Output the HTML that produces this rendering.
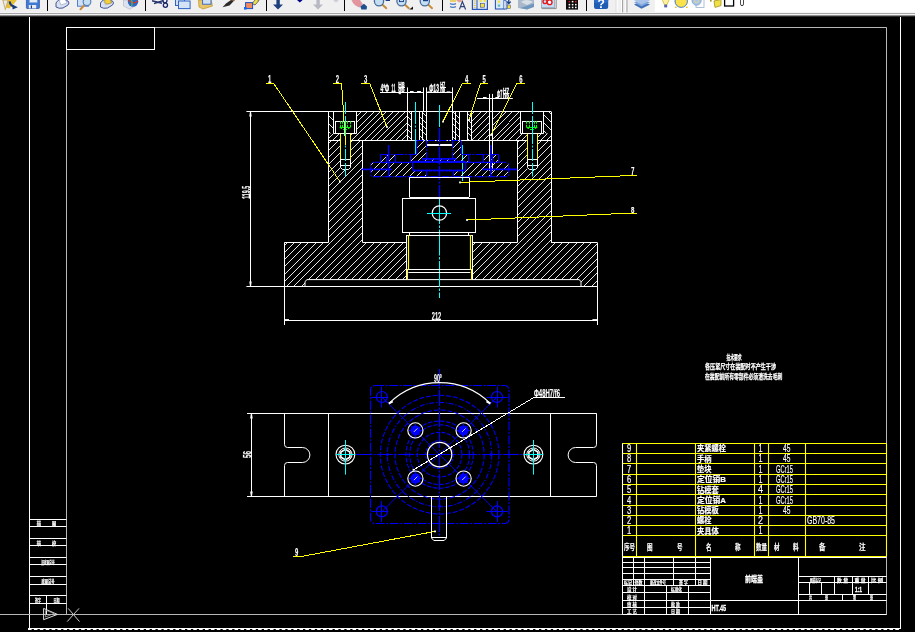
<!DOCTYPE html>
<html lang="zh"><head><meta charset="utf-8"><title>CAD</title>
<style>
html,body{margin:0;padding:0;background:#000;overflow:hidden}
svg{display:block}
text{white-space:pre}
</style></head><body>
<svg width="915" height="632" viewBox="0 0 915 632">
<defs>
<filter id="nf" filterUnits="userSpaceOnUse" x="0" y="0" width="915" height="632" color-interpolation-filters="sRGB"><feOffset dx="0" dy="0"/></filter>
<clipPath id="c1"><path d="M328.6,140.5 H362.4 V242.4 H328.6 ZM340,140.5 H350.4 V169.6 H340 Z" clip-rule="evenodd"/></clipPath>
<clipPath id="c2"><path d="M517.6,140.5 H551 V242.4 H517.6 ZM527.2,140.5 H537.8 V169.6 H527.2 Z" clip-rule="evenodd"/></clipPath>
<clipPath id="c3"><path d="M284.4,242.4 H597 V286.4 H581 V279.6 H305 V286.4 H284.4 ZM406.4,242.4 H472 V279.6 H406.4 Z" clip-rule="evenodd"/></clipPath>
<clipPath id="c4"><path d="M328.6,111.6 H551 V140.5 H328.6 ZM328.6,111.6 H333.6 V133.6 H328.6 ZM543.5,111.6 H551 V133.6 H543.5 ZM333.6,111.6 H356.4 V133.6 H333.6 ZM340,133.6 H350.4 V140.5 H340 ZM520.5,111.6 H543.5 V133.6 H520.5 ZM527.2,133.6 H537.8 V140.5 H527.2 ZM407.5,111.6 H471.1 V140.5 H407.5 ZM489.5,111.6 H492.1 V140.5 H489.5 Z" clip-rule="evenodd"/></clipPath>
<clipPath id="c5"><path d="M328.6,111.6 H333.6 V133.6 H328.6 Z" clip-rule="evenodd"/></clipPath>
<clipPath id="c6"><path d="M543.5,111.6 H551 V133.6 H543.5 Z" clip-rule="evenodd"/></clipPath>
<clipPath id="c7"><path d="M407.5,111.6 H411.3 V140.5 H407.5 Z" clip-rule="evenodd"/></clipPath>
<clipPath id="c8"><path d="M419.1,111.6 H426.2 V140.5 H419.1 Z" clip-rule="evenodd"/></clipPath>
<clipPath id="c9"><path d="M452.4,111.6 H459.4 V140.5 H452.4 Z" clip-rule="evenodd"/></clipPath>
<clipPath id="c10"><path d="M467,111.6 H471.1 V140.5 H467 Z" clip-rule="evenodd"/></clipPath>
<clipPath id="c11"><path d="M370.8,162.3 H380.5 V154.4 H416.5 V140.8 H461.9 V154.4 H498.4 V162.3 H508.5 V176.6 H370.8 ZM426.7,140.8 H452.8 V159 H426.7 ZM412.5,161.4 H465.7 V170.3 H412.5 ZM426.2,170.3 H453 V176.6 H426.2 ZM395.4,154.4 H410.6 V162.3 H395.4 ZM468.6,154.4 H483.8 V162.3 H468.6 Z" clip-rule="evenodd"/></clipPath>
</defs>
<rect x="0" y="0" width="915" height="632" fill="#000"/>
<g stroke-linecap="butt" filter="url(#nf)">
<line x1="29.5" y1="16.5" x2="29.5" y2="628.3" stroke="#fff" stroke-width="1" />
<line x1="900.5" y1="16.5" x2="900.5" y2="628.3" stroke="#fff" stroke-width="1" />
<line x1="28" y1="628.5" x2="901" y2="628.5" stroke="#fff" stroke-width="1" />
<line x1="28" y1="629.5" x2="901" y2="629.5" stroke="#fff" stroke-width="1.2" stroke-dasharray="3.6 2.3"/>
<line x1="66.4" y1="27.5" x2="886.6" y2="27.5" stroke="#b8b8b8" stroke-width="1" />
<line x1="66.5" y1="27.4" x2="66.5" y2="614.4" stroke="#b8b8b8" stroke-width="1" />
<line x1="886.5" y1="27.4" x2="886.5" y2="614.4" stroke="#b8b8b8" stroke-width="1" />
<line x1="0" y1="614.5" x2="886.6" y2="614.5" stroke="#b8b8b8" stroke-width="1" />
<rect x="66.5" y="27.5" width="88" height="22" fill="none" stroke="#fff" stroke-width="1" />
<line x1="29.5" y1="519.5" x2="66.4" y2="519.5" stroke="#fff" stroke-width="1" />
<line x1="29.5" y1="526.5" x2="66.4" y2="526.5" stroke="#fff" stroke-width="1" />
<line x1="29.5" y1="538.5" x2="66.4" y2="538.5" stroke="#fff" stroke-width="1" />
<line x1="29.5" y1="545.5" x2="66.4" y2="545.5" stroke="#fff" stroke-width="1" />
<line x1="29.5" y1="557.5" x2="66.4" y2="557.5" stroke="#fff" stroke-width="1" />
<line x1="29.5" y1="564.5" x2="66.4" y2="564.5" stroke="#fff" stroke-width="1" />
<line x1="29.5" y1="576.5" x2="66.4" y2="576.5" stroke="#fff" stroke-width="1" />
<line x1="29.5" y1="584.5" x2="66.4" y2="584.5" stroke="#fff" stroke-width="1" />
<line x1="29.5" y1="595.5" x2="66.4" y2="595.5" stroke="#fff" stroke-width="1" />
<line x1="29.5" y1="603.5" x2="66.4" y2="603.5" stroke="#fff" stroke-width="1" />
<line x1="46.5" y1="595.5" x2="46.5" y2="614.4" stroke="#fff" stroke-width="1" />
<text x="36.8" y="525.3" font-size="5" fill="#fff" font-family="Liberation Sans, Noto Sans CJK SC, sans-serif" textLength="4.2" lengthAdjust="spacingAndGlyphs" font-weight="bold" stroke="#fff" stroke-width="0.2" >描</text>
<text x="52" y="525.3" font-size="5" fill="#fff" font-family="Liberation Sans, Noto Sans CJK SC, sans-serif" textLength="4.2" lengthAdjust="spacingAndGlyphs" font-weight="bold" stroke="#fff" stroke-width="0.2" >图</text>
<text x="36.8" y="544.5" font-size="5" fill="#fff" font-family="Liberation Sans, Noto Sans CJK SC, sans-serif" textLength="4.2" lengthAdjust="spacingAndGlyphs" font-weight="bold" stroke="#fff" stroke-width="0.2" >描</text>
<text x="52" y="544.5" font-size="5" fill="#fff" font-family="Liberation Sans, Noto Sans CJK SC, sans-serif" textLength="4.2" lengthAdjust="spacingAndGlyphs" font-weight="bold" stroke="#fff" stroke-width="0.2" >校</text>
<text x="48" y="563.5" font-size="5" fill="#fff" font-family="Liberation Sans, Noto Sans CJK SC, sans-serif" textLength="13" lengthAdjust="spacingAndGlyphs" text-anchor="middle" font-weight="bold" stroke="#fff" stroke-width="0.2" >旧底图总号</text>
<text x="48" y="583" font-size="5" fill="#fff" font-family="Liberation Sans, Noto Sans CJK SC, sans-serif" textLength="13" lengthAdjust="spacingAndGlyphs" text-anchor="middle" font-weight="bold" stroke="#fff" stroke-width="0.2" >底图总号</text>
<text x="38" y="602.3" font-size="5" fill="#fff" font-family="Liberation Sans, Noto Sans CJK SC, sans-serif" textLength="6" lengthAdjust="spacingAndGlyphs" text-anchor="middle" font-weight="bold" stroke="#fff" stroke-width="0.2" >签字</text>
<text x="56.5" y="602.3" font-size="5" fill="#fff" font-family="Liberation Sans, Noto Sans CJK SC, sans-serif" textLength="6" lengthAdjust="spacingAndGlyphs" text-anchor="middle" font-weight="bold" stroke="#fff" stroke-width="0.2" >日期</text>
<path d="M43.6,608.4 L43.6,619.7 L57.4,614.4 Z" fill="none" stroke="#ddd" stroke-width="1" />
<path d="M45.6,610.2 L45.6,617 L54,613.4 Z" fill="none" stroke="#aaa" stroke-width="0.8" />
<line x1="68.2" y1="608.4" x2="79.5" y2="621.6" stroke="#ccc" stroke-width="1" />
<line x1="79" y1="608.4" x2="67.2" y2="621.6" stroke="#ccc" stroke-width="1" />
<path d="M327.6,144 L363.4,108.2 M327.6,151.25 L363.4,115.45 M327.6,158.5 L363.4,122.7 M327.6,165.75 L363.4,129.95 M327.6,173 L363.4,137.2 M327.6,180.25 L363.4,144.45 M327.6,187.5 L363.4,151.7 M327.6,194.75 L363.4,158.95 M327.6,202 L363.4,166.2 M327.6,209.25 L363.4,173.45 M327.6,216.5 L363.4,180.7 M327.6,223.75 L363.4,187.95 M327.6,231 L363.4,195.2 M327.6,238.25 L363.4,202.45 M327.6,245.5 L363.4,209.7 M327.6,252.75 L363.4,216.95 M327.6,260 L363.4,224.2 M327.6,267.25 L363.4,231.45 M327.6,274.5 L363.4,238.7" clip-path="url(#c1)" fill="none" stroke="#fff" stroke-width="0.9" shape-rendering="crispEdges"/>
<path d="M516.6,143.5 L552,108.1 M516.6,150.75 L552,115.35 M516.6,158 L552,122.6 M516.6,165.25 L552,129.85 M516.6,172.5 L552,137.1 M516.6,179.75 L552,144.35 M516.6,187 L552,151.6 M516.6,194.25 L552,158.85 M516.6,201.5 L552,166.1 M516.6,208.75 L552,173.35 M516.6,216 L552,180.6 M516.6,223.25 L552,187.85 M516.6,230.5 L552,195.1 M516.6,237.75 L552,202.35 M516.6,245 L552,209.6 M516.6,252.25 L552,216.85 M516.6,259.5 L552,224.1 M516.6,266.75 L552,231.35 M516.6,274 L552,238.6" clip-path="url(#c2)" fill="none" stroke="#fff" stroke-width="0.9" shape-rendering="crispEdges"/>
<path d="M283.4,246.2 L598,-68.4 M283.4,253.45 L598,-61.15 M283.4,260.7 L598,-53.9 M283.4,267.95 L598,-46.65 M283.4,275.2 L598,-39.4 M283.4,282.45 L598,-32.15 M283.4,289.7 L598,-24.9 M283.4,296.95 L598,-17.65 M283.4,304.2 L598,-10.4 M283.4,311.45 L598,-3.15 M283.4,318.7 L598,4.1 M283.4,325.95 L598,11.35 M283.4,333.2 L598,18.6 M283.4,340.45 L598,25.85 M283.4,347.7 L598,33.1 M283.4,354.95 L598,40.35 M283.4,362.2 L598,47.6 M283.4,369.45 L598,54.85 M283.4,376.7 L598,62.1 M283.4,383.95 L598,69.35 M283.4,391.2 L598,76.6 M283.4,398.45 L598,83.85 M283.4,405.7 L598,91.1 M283.4,412.95 L598,98.35 M283.4,420.2 L598,105.6 M283.4,427.45 L598,112.85 M283.4,434.7 L598,120.1 M283.4,441.95 L598,127.35 M283.4,449.2 L598,134.6 M283.4,456.45 L598,141.85 M283.4,463.7 L598,149.1 M283.4,470.95 L598,156.35 M283.4,478.2 L598,163.6 M283.4,485.45 L598,170.85 M283.4,492.7 L598,178.1 M283.4,499.95 L598,185.35 M283.4,507.2 L598,192.6 M283.4,514.45 L598,199.85 M283.4,521.7 L598,207.1 M283.4,528.95 L598,214.35 M283.4,536.2 L598,221.6 M283.4,543.45 L598,228.85 M283.4,550.7 L598,236.1 M283.4,557.95 L598,243.35 M283.4,565.2 L598,250.6 M283.4,572.45 L598,257.85 M283.4,579.7 L598,265.1 M283.4,586.95 L598,272.35 M283.4,594.2 L598,279.6" clip-path="url(#c3)" fill="none" stroke="#fff" stroke-width="0.9" shape-rendering="crispEdges"/>
<path d="M327.6,113.9 L552,-110.5 M327.6,120.2 L552,-104.2 M327.6,126.5 L552,-97.9 M327.6,132.8 L552,-91.6 M327.6,139.1 L552,-85.3 M327.6,145.4 L552,-79 M327.6,151.7 L552,-72.7 M327.6,158 L552,-66.4 M327.6,164.3 L552,-60.1 M327.6,170.6 L552,-53.8 M327.6,176.9 L552,-47.5 M327.6,183.2 L552,-41.2 M327.6,189.5 L552,-34.9 M327.6,195.8 L552,-28.6 M327.6,202.1 L552,-22.3 M327.6,208.4 L552,-16 M327.6,214.7 L552,-9.7 M327.6,221 L552,-3.4 M327.6,227.3 L552,2.9 M327.6,233.6 L552,9.2 M327.6,239.9 L552,15.5 M327.6,246.2 L552,21.8 M327.6,252.5 L552,28.1 M327.6,258.8 L552,34.4 M327.6,265.1 L552,40.7 M327.6,271.4 L552,47 M327.6,277.7 L552,53.3 M327.6,284 L552,59.6 M327.6,290.3 L552,65.9 M327.6,296.6 L552,72.2 M327.6,302.9 L552,78.5 M327.6,309.2 L552,84.8 M327.6,315.5 L552,91.1 M327.6,321.8 L552,97.4 M327.6,328.1 L552,103.7 M327.6,334.4 L552,110 M327.6,340.7 L552,116.3 M327.6,347 L552,122.6 M327.6,353.3 L552,128.9 M327.6,359.6 L552,135.2" clip-path="url(#c4)" fill="none" stroke="#fff" stroke-width="0.9" shape-rendering="crispEdges"/>
<path d="M327.6,130.3 L334.6,137.3 M327.6,122.3 L334.6,129.3 M327.6,114.3 L334.6,121.3 M327.6,106.3 L334.6,113.3" clip-path="url(#c5)" fill="none" stroke="#fff" stroke-width="0.9" shape-rendering="crispEdges"/>
<path d="M542.5,129.2 L552,138.7 M542.5,121.2 L552,130.7 M542.5,113.2 L552,122.7 M542.5,105.2 L552,114.7" clip-path="url(#c6)" fill="none" stroke="#fff" stroke-width="0.9" shape-rendering="crispEdges"/>
<path d="M406.5,134.6 L412.3,140.4 M406.5,128.3 L412.3,134.1 M406.5,122 L412.3,127.8 M406.5,115.7 L412.3,121.5 M406.5,109.4 L412.3,115.2" clip-path="url(#c7)" fill="none" stroke="#fff" stroke-width="0.9" shape-rendering="crispEdges"/>
<path d="M418.1,133.6 L427.2,142.7 M418.1,127.3 L427.2,136.4 M418.1,121 L427.2,130.1 M418.1,114.7 L427.2,123.8 M418.1,108.4 L427.2,117.5" clip-path="url(#c8)" fill="none" stroke="#fff" stroke-width="0.9" shape-rendering="crispEdges"/>
<path d="M451.4,135.4 L460.4,144.4 M451.4,129.1 L460.4,138.1 M451.4,122.8 L460.4,131.8 M451.4,116.5 L460.4,125.5 M451.4,110.2 L460.4,119.2 M451.4,103.9 L460.4,112.9" clip-path="url(#c9)" fill="none" stroke="#fff" stroke-width="0.9" shape-rendering="crispEdges"/>
<path d="M466,137.4 L472.1,143.5 M466,131.1 L472.1,137.2 M466,124.8 L472.1,130.9 M466,118.5 L472.1,124.6 M466,112.2 L472.1,118.3" clip-path="url(#c10)" fill="none" stroke="#fff" stroke-width="0.9" shape-rendering="crispEdges"/>
<line x1="246.4" y1="111.5" x2="551" y2="111.5" stroke="#fff" stroke-width="1" />
<line x1="246.4" y1="286.5" x2="597" y2="286.5" stroke="#fff" stroke-width="1" />
<line x1="328.5" y1="111.6" x2="328.5" y2="242.4" stroke="#fff" stroke-width="1" />
<line x1="551.5" y1="111.6" x2="551.5" y2="242.4" stroke="#fff" stroke-width="1" />
<line x1="328.6" y1="140.5" x2="340" y2="140.5" stroke="#fff" stroke-width="1" />
<line x1="350.4" y1="140.5" x2="527.2" y2="140.5" stroke="#fff" stroke-width="1" />
<line x1="537.8" y1="140.5" x2="551" y2="140.5" stroke="#fff" stroke-width="1" />
<line x1="362.5" y1="140.5" x2="362.5" y2="242.4" stroke="#fff" stroke-width="1" />
<line x1="517.5" y1="140.5" x2="517.5" y2="242.4" stroke="#fff" stroke-width="1" />
<line x1="284.4" y1="242.5" x2="328.6" y2="242.5" stroke="#fff" stroke-width="1" />
<line x1="362.4" y1="242.5" x2="406.4" y2="242.5" stroke="#fff" stroke-width="1" />
<line x1="472" y1="242.5" x2="517.6" y2="242.5" stroke="#fff" stroke-width="1" />
<line x1="551" y1="242.5" x2="597" y2="242.5" stroke="#fff" stroke-width="1" />
<line x1="284.5" y1="242.4" x2="284.5" y2="325" stroke="#fff" stroke-width="1" />
<line x1="597.5" y1="242.4" x2="597.5" y2="325" stroke="#fff" stroke-width="1" />
<path d="M305,286.4 L305,281.5 L307,279.6 L579,279.6 L581,281.5 L581,286.4" fill="none" stroke="#fff" stroke-width="1" />
<line x1="406.5" y1="235" x2="406.5" y2="279.6" stroke="#fff" stroke-width="1" />
<line x1="472.5" y1="235" x2="472.5" y2="279.6" stroke="#fff" stroke-width="1" />
<line x1="407.5" y1="111.6" x2="407.5" y2="140.5" stroke="#fff" stroke-width="1" />
<line x1="411.5" y1="111.6" x2="411.5" y2="140.5" stroke="#fff" stroke-width="1" />
<line x1="419.5" y1="111.6" x2="419.5" y2="140.5" stroke="#fff" stroke-width="1" />
<line x1="422.5" y1="111.6" x2="422.5" y2="140.5" stroke="#fff" stroke-width="1" />
<line x1="426.5" y1="111.6" x2="426.5" y2="140.5" stroke="#fff" stroke-width="1" />
<line x1="452.5" y1="111.6" x2="452.5" y2="140.5" stroke="#fff" stroke-width="1" />
<line x1="455.5" y1="111.6" x2="455.5" y2="140.5" stroke="#fff" stroke-width="1" />
<line x1="459.5" y1="111.6" x2="459.5" y2="140.5" stroke="#fff" stroke-width="1" />
<line x1="467.5" y1="111.6" x2="467.5" y2="140.5" stroke="#fff" stroke-width="1" />
<line x1="471.5" y1="111.6" x2="471.5" y2="140.5" stroke="#fff" stroke-width="1" />
<line x1="407.5" y1="87.4" x2="407.5" y2="111.6" stroke="#fff" stroke-width="1" />
<line x1="423.5" y1="87.4" x2="423.5" y2="111.6" stroke="#fff" stroke-width="1" />
<line x1="426.5" y1="87.4" x2="426.5" y2="111.6" stroke="#fff" stroke-width="1" />
<line x1="452.5" y1="87.4" x2="452.5" y2="111.6" stroke="#fff" stroke-width="1" />
<line x1="489.5" y1="93.9" x2="489.5" y2="171" stroke="#fff" stroke-width="1" />
<line x1="492.5" y1="93.9" x2="492.5" y2="171" stroke="#fff" stroke-width="1" />
<line x1="333.5" y1="111.6" x2="333.5" y2="133.6" stroke="#fff" stroke-width="1" />
<line x1="356.5" y1="111.6" x2="356.5" y2="133.6" stroke="#fff" stroke-width="1" />
<line x1="333.6" y1="133.5" x2="356.4" y2="133.5" stroke="#fff" stroke-width="1" />
<rect x="335.5" y="121.5" width="19" height="12" fill="none" stroke="#fff" stroke-width="1" />
<line x1="340.5" y1="121.2" x2="340.5" y2="123.8" stroke="#0f0" stroke-width="1" />
<line x1="340.5" y1="124.8" x2="340.5" y2="127.2" stroke="#0f0" stroke-width="1" />
<line x1="342.5" y1="121.2" x2="342.5" y2="123.8" stroke="#0f0" stroke-width="1" />
<line x1="342.5" y1="124.8" x2="342.5" y2="127.2" stroke="#0f0" stroke-width="1" />
<line x1="347.5" y1="121.2" x2="347.5" y2="123.8" stroke="#0f0" stroke-width="1" />
<line x1="347.5" y1="124.8" x2="347.5" y2="127.2" stroke="#0f0" stroke-width="1" />
<line x1="350.5" y1="121.2" x2="350.5" y2="123.8" stroke="#0f0" stroke-width="1" />
<line x1="350.5" y1="124.8" x2="350.5" y2="127.2" stroke="#0f0" stroke-width="1" />
<line x1="339.6" y1="127.5" x2="350.4" y2="127.5" stroke="#0f0" stroke-width="1" />
<path d="M340.4,127.4 L341.3,128.9 L342.2,127.4" fill="none" stroke="#0f0" stroke-width="1" />
<path d="M347.8,127.4 L348.7,128.9 L349.6,127.4" fill="none" stroke="#0f0" stroke-width="1" />
<line x1="343.1" y1="129.5" x2="346.9" y2="129.5" stroke="#0f0" stroke-width="1" />
<line x1="340.5" y1="133.6" x2="340.5" y2="159.7" stroke="#ff0" stroke-width="1" />
<line x1="350.5" y1="133.6" x2="350.5" y2="159.7" stroke="#ff0" stroke-width="1" />
<line x1="340.5" y1="159.7" x2="340.5" y2="167.6" stroke="#fff" stroke-width="1" />
<line x1="350.5" y1="159.7" x2="350.5" y2="167.6" stroke="#fff" stroke-width="1" />
<path d="M340.5,167.6 L342.5,169.5 L348.5,169.5 L350.5,167.6" fill="none" stroke="#fff" stroke-width="1" />
<line x1="340" y1="159.5" x2="350.4" y2="159.5" stroke="#fff" stroke-width="1" />
<line x1="340" y1="165.5" x2="350.4" y2="165.5" stroke="#fff" stroke-width="1" />
<line x1="345.5" y1="102" x2="345.5" y2="176.5" stroke="#0ff" stroke-width="1" stroke-dasharray="12 2 28 1.5 2 1.5"/>
<line x1="520.5" y1="111.6" x2="520.5" y2="133.6" stroke="#fff" stroke-width="1" />
<line x1="543.5" y1="111.6" x2="543.5" y2="133.6" stroke="#fff" stroke-width="1" />
<line x1="520.5" y1="133.5" x2="543.5" y2="133.5" stroke="#fff" stroke-width="1" />
<rect x="522.5" y="121.5" width="19" height="12" fill="none" stroke="#fff" stroke-width="1" />
<line x1="526.5" y1="121.2" x2="526.5" y2="123.8" stroke="#0f0" stroke-width="1" />
<line x1="526.5" y1="124.8" x2="526.5" y2="127.2" stroke="#0f0" stroke-width="1" />
<line x1="529.5" y1="121.2" x2="529.5" y2="123.8" stroke="#0f0" stroke-width="1" />
<line x1="529.5" y1="124.8" x2="529.5" y2="127.2" stroke="#0f0" stroke-width="1" />
<line x1="534.5" y1="121.2" x2="534.5" y2="123.8" stroke="#0f0" stroke-width="1" />
<line x1="534.5" y1="124.8" x2="534.5" y2="127.2" stroke="#0f0" stroke-width="1" />
<line x1="536.5" y1="121.2" x2="536.5" y2="123.8" stroke="#0f0" stroke-width="1" />
<line x1="536.5" y1="124.8" x2="536.5" y2="127.2" stroke="#0f0" stroke-width="1" />
<line x1="526.5" y1="127.5" x2="537.3" y2="127.5" stroke="#0f0" stroke-width="1" />
<path d="M527.3,127.4 L528.2,128.9 L529.1,127.4" fill="none" stroke="#0f0" stroke-width="1" />
<path d="M534.7,127.4 L535.6,128.9 L536.5,127.4" fill="none" stroke="#0f0" stroke-width="1" />
<line x1="530" y1="129.5" x2="533.8" y2="129.5" stroke="#0f0" stroke-width="1" />
<line x1="527.5" y1="133.6" x2="527.5" y2="159.7" stroke="#ff0" stroke-width="1" />
<line x1="537.5" y1="133.6" x2="537.5" y2="159.7" stroke="#ff0" stroke-width="1" />
<line x1="527.5" y1="159.7" x2="527.5" y2="167.6" stroke="#fff" stroke-width="1" />
<line x1="537.5" y1="159.7" x2="537.5" y2="167.6" stroke="#fff" stroke-width="1" />
<path d="M527.5,167.6 L529.5,169.5 L535.5,169.5 L537.5,167.6" fill="none" stroke="#fff" stroke-width="1" />
<line x1="527.2" y1="159.5" x2="537.8" y2="159.5" stroke="#fff" stroke-width="1" />
<line x1="527.2" y1="165.5" x2="537.8" y2="165.5" stroke="#fff" stroke-width="1" />
<line x1="532.5" y1="102" x2="532.5" y2="176.5" stroke="#0ff" stroke-width="1" stroke-dasharray="12 2 28 1.5 2 1.5"/>
<line x1="415.5" y1="102" x2="415.5" y2="154" stroke="#0ff" stroke-width="1" stroke-dasharray="22 1.5 2 1.5"/>
<line x1="462.5" y1="145" x2="462.5" y2="181" stroke="#0ff" stroke-width="1" />
<line x1="415.5" y1="144" x2="415.5" y2="154" stroke="#0ff" stroke-width="1" />
<line x1="426.9" y1="145" x2="452.2" y2="145" stroke="#fff" stroke-width="2" />
<path d="M369.8,144.4 L509.5,4.7 M369.8,151.6 L509.5,11.9 M369.8,158.8 L509.5,19.1 M369.8,166 L509.5,26.3 M369.8,173.2 L509.5,33.5 M369.8,180.4 L509.5,40.7 M369.8,187.6 L509.5,47.9 M369.8,194.8 L509.5,55.1 M369.8,202 L509.5,62.3 M369.8,209.2 L509.5,69.5 M369.8,216.4 L509.5,76.7 M369.8,223.6 L509.5,83.9 M369.8,230.8 L509.5,91.1 M369.8,238 L509.5,98.3 M369.8,245.2 L509.5,105.5 M369.8,252.4 L509.5,112.7 M369.8,259.6 L509.5,119.9 M369.8,266.8 L509.5,127.1 M369.8,274 L509.5,134.3 M369.8,281.2 L509.5,141.5 M369.8,288.4 L509.5,148.7 M369.8,295.6 L509.5,155.9 M369.8,302.8 L509.5,163.1 M369.8,310 L509.5,170.3" clip-path="url(#c11)" fill="none" stroke="#fff" stroke-width="0.9" shape-rendering="crispEdges"/>
<rect x="370.8" y="162.3" width="137.7" height="14.3" rx="2" fill="none" stroke="#00f" stroke-width="1.1" stroke-dasharray="7 1.5 1.5 1.5"/>
<line x1="380.5" y1="154.5" x2="416.5" y2="154.5" stroke="#00f" stroke-width="1.1" stroke-dasharray="9 1.5 2 1.5"/>
<line x1="461.9" y1="154.5" x2="498.4" y2="154.5" stroke="#00f" stroke-width="1.1" stroke-dasharray="9 1.5 2 1.5"/>
<line x1="380.5" y1="154.4" x2="380.5" y2="162.3" stroke="#00f" stroke-width="1.1" />
<line x1="498.5" y1="154.4" x2="498.5" y2="162.3" stroke="#00f" stroke-width="1.1" />
<line x1="386.5" y1="154.4" x2="386.5" y2="162.3" stroke="#00f" stroke-width="1.1" />
<line x1="395.5" y1="154.4" x2="395.5" y2="162.3" stroke="#00f" stroke-width="1.1" />
<line x1="410.5" y1="154.4" x2="410.5" y2="162.3" stroke="#00f" stroke-width="1.1" />
<line x1="468.5" y1="154.4" x2="468.5" y2="162.3" stroke="#00f" stroke-width="1.1" />
<line x1="483.5" y1="154.4" x2="483.5" y2="162.3" stroke="#00f" stroke-width="1.1" />
<line x1="492.5" y1="154.4" x2="492.5" y2="162.3" stroke="#00f" stroke-width="1.1" />
<line x1="395.4" y1="162.5" x2="410.6" y2="162.5" stroke="#00f" stroke-width="1.1" />
<line x1="468.6" y1="162.5" x2="483.8" y2="162.5" stroke="#00f" stroke-width="1.1" />
<line x1="380.5" y1="162.5" x2="395.4" y2="162.5" stroke="#00f" stroke-width="1.1" />
<line x1="483.8" y1="162.5" x2="498.4" y2="162.5" stroke="#00f" stroke-width="1.1" />
<line x1="416.5" y1="140.8" x2="416.5" y2="154.4" stroke="#00f" stroke-width="1.1" />
<line x1="461.5" y1="140.8" x2="461.5" y2="154.4" stroke="#00f" stroke-width="1.1" />
<line x1="416.5" y1="140.5" x2="461.9" y2="140.5" stroke="#00f" stroke-width="1.1" stroke-dasharray="7 1.5 1.5 1.5"/>
<line x1="426.5" y1="140.8" x2="426.5" y2="159" stroke="#00f" stroke-width="1.1" stroke-dasharray="7 1.5 1.5 1.5"/>
<line x1="452.5" y1="140.8" x2="452.5" y2="159" stroke="#00f" stroke-width="1.1" stroke-dasharray="7 1.5 1.5 1.5"/>
<line x1="422" y1="158.9" x2="456.4" y2="158.9" stroke="#00f" stroke-width="1.6" />
<rect x="412.5" y="161.4" width="53.2" height="8.9" rx="1.5" fill="none" stroke="#00f" stroke-width="1.2"/>
<line x1="413" y1="162.5" x2="465" y2="162.5" stroke="#00f" stroke-width="1.1" stroke-dasharray="7 1.5 1.5 1.5"/>
<line x1="426.5" y1="170.3" x2="426.5" y2="176.6" stroke="#00f" stroke-width="1.1" />
<line x1="453.5" y1="170.3" x2="453.5" y2="176.6" stroke="#00f" stroke-width="1.1" />
<line x1="413" y1="170.6" x2="465" y2="170.6" stroke="#00f" stroke-width="1.6" stroke-dasharray="3 1"/>
<line x1="361.3" y1="169.4" x2="391.6" y2="169.4" stroke="#00f" stroke-width="1.6" />
<line x1="482.5" y1="169.4" x2="517.3" y2="169.4" stroke="#00f" stroke-width="1.6" />
<line x1="388.5" y1="145" x2="388.5" y2="176" stroke="#00f" stroke-width="1.4" />
<line x1="490.7" y1="145" x2="490.7" y2="176" stroke="#00f" stroke-width="1.4" />
<line x1="439.5" y1="105" x2="439.5" y2="127" stroke="#0ff" stroke-width="1" />
<line x1="439.5" y1="128" x2="439.5" y2="198" stroke="#00f" stroke-width="1.3" stroke-dasharray="14 1.5 2 1.5"/>
<line x1="439.5" y1="198" x2="439.5" y2="298" stroke="#0ff" stroke-width="1" stroke-dasharray="26 1.5 2.5 1.5"/>
<line x1="409.5" y1="177.4" x2="409.5" y2="197" stroke="#fff" stroke-width="1" />
<line x1="469.5" y1="177.4" x2="469.5" y2="197" stroke="#fff" stroke-width="1" />
<line x1="409.4" y1="197.5" x2="469" y2="197.5" stroke="#fff" stroke-width="1" />
<line x1="409.4" y1="177.5" x2="469" y2="177.5" stroke="#fff" stroke-width="1" />
<rect x="402.5" y="198.5" width="73" height="34" fill="none" stroke="#fff" stroke-width="1" />
<line x1="409.5" y1="232.2" x2="409.5" y2="235" stroke="#fff" stroke-width="1" />
<line x1="468.5" y1="232.2" x2="468.5" y2="235" stroke="#fff" stroke-width="1" />
<line x1="406.4" y1="235.5" x2="472" y2="235.5" stroke="#fff" stroke-width="1" />
<line x1="408.5" y1="235" x2="408.5" y2="270" stroke="#ff0" stroke-width="1.2" />
<line x1="470.5" y1="235" x2="470.5" y2="270" stroke="#ff0" stroke-width="1.2" />
<line x1="407.5" y1="269" x2="407.5" y2="279.4" stroke="#ff0" stroke-width="1" />
<line x1="471.5" y1="269" x2="471.5" y2="279.4" stroke="#ff0" stroke-width="1" />
<line x1="408.4" y1="269.5" x2="470.4" y2="269.5" stroke="#fff" stroke-width="1" />
<line x1="408.4" y1="272.5" x2="470.4" y2="272.5" stroke="#fff" stroke-width="1" />
<circle cx="439.4" cy="213" r="7.2" fill="none" stroke="#fff" stroke-width="1.25" />
<line x1="427" y1="213.5" x2="451" y2="213.5" stroke="#0ff" stroke-width="1" />
<line x1="380" y1="92.5" x2="423.6" y2="92.5" stroke="#fff" stroke-width="1" />
<text x="380.4" y="92" font-size="10.5" fill="#fff" font-family="Liberation Sans, sans-serif" textLength="8.8" lengthAdjust="spacingAndGlyphs" font-weight="bold" stroke="#fff" stroke-width="0.3" >4*Φ</text>
<text x="391.6" y="92" font-size="10.5" fill="#fff" font-family="Liberation Sans, sans-serif" textLength="3.8" lengthAdjust="spacingAndGlyphs" font-weight="bold" stroke="#fff" stroke-width="0.3" >11</text>
<text x="398.3" y="86.8" font-size="6.8" fill="#fff" font-family="Liberation Sans, sans-serif" textLength="6.3" lengthAdjust="spacingAndGlyphs" font-weight="bold" stroke="#fff" stroke-width="0.3" >H8</text>
<text x="398.3" y="92.1" font-size="6.8" fill="#fff" font-family="Liberation Sans, sans-serif" textLength="6.3" lengthAdjust="spacingAndGlyphs" font-weight="bold" stroke="#fff" stroke-width="0.3" >g6</text>
<line x1="398.3" y1="87.5" x2="405" y2="87.5" stroke="#fff" stroke-width="1" />
<line x1="410" y1="91.8" x2="413.6" y2="91.8" stroke="#fff" stroke-width="1.6" />
<line x1="417" y1="91.8" x2="421" y2="91.8" stroke="#fff" stroke-width="1.6" />
<line x1="426.5" y1="92.5" x2="452.6" y2="92.5" stroke="#fff" stroke-width="1" />
<text x="429.3" y="92.3" font-size="10.5" fill="#fff" font-family="Liberation Sans, sans-serif" textLength="9.6" lengthAdjust="spacingAndGlyphs" font-weight="bold" stroke="#fff" stroke-width="0.3" >Φ13</text>
<text x="440.2" y="86.8" font-size="6.8" fill="#fff" font-family="Liberation Sans, sans-serif" textLength="5" lengthAdjust="spacingAndGlyphs" font-weight="bold" stroke="#fff" stroke-width="0.3" >H7</text>
<text x="440.2" y="92.2" font-size="6.8" fill="#fff" font-family="Liberation Sans, sans-serif" textLength="5" lengthAdjust="spacingAndGlyphs" font-weight="bold" stroke="#fff" stroke-width="0.3" >h6</text>
<line x1="440.2" y1="87.5" x2="446" y2="87.5" stroke="#fff" stroke-width="1" />
<line x1="427.5" y1="92.2" x2="431.5" y2="92.2" stroke="#fff" stroke-width="1.6" />
<line x1="446.6" y1="92.2" x2="450.4" y2="92.2" stroke="#fff" stroke-width="1.6" />
<line x1="477" y1="98.5" x2="512.8" y2="98.5" stroke="#fff" stroke-width="1" />
<text x="497" y="97.8" font-size="10.5" fill="#fff" font-family="Liberation Sans, sans-serif" textLength="5.4" lengthAdjust="spacingAndGlyphs" font-weight="bold" stroke="#fff" stroke-width="0.3" >Φ7</text>
<text x="503" y="92.8" font-size="6.8" fill="#fff" font-family="Liberation Sans, sans-serif" textLength="6" lengthAdjust="spacingAndGlyphs" font-weight="bold" stroke="#fff" stroke-width="0.3" >H7</text>
<text x="503" y="98" font-size="6.8" fill="#fff" font-family="Liberation Sans, sans-serif" textLength="6" lengthAdjust="spacingAndGlyphs" font-weight="bold" stroke="#fff" stroke-width="0.3" >n6</text>
<line x1="503" y1="93.5" x2="509.4" y2="93.5" stroke="#fff" stroke-width="1" />
<line x1="483" y1="97.9" x2="486.6" y2="97.9" stroke="#fff" stroke-width="1.8" />
<line x1="495.3" y1="97.9" x2="498.8" y2="97.9" stroke="#fff" stroke-width="1.8" />
<line x1="250.5" y1="111.6" x2="250.5" y2="286.4" stroke="#fff" stroke-width="1" />
<path d="M249.6,116.5 L250.5,111.6 L251.4,116.5" fill="none" stroke="#fff" stroke-width="0.8" />
<path d="M249.6,281.5 L250.5,286.4 L251.4,281.5" fill="none" stroke="#fff" stroke-width="0.8" />
<text x="250" y="198.8" font-size="10" fill="#fff" font-family="Liberation Sans, sans-serif" textLength="12.9" lengthAdjust="spacingAndGlyphs" font-weight="bold" stroke="#fff" stroke-width="0.15" transform="rotate(-90 250 198.8)" >119.5</text>
<line x1="284.4" y1="320.5" x2="597" y2="320.5" stroke="#fff" stroke-width="1" />
<line x1="284.4" y1="320" x2="289" y2="320" stroke="#fff" stroke-width="1.8" />
<line x1="592.4" y1="320" x2="597" y2="320" stroke="#fff" stroke-width="1.8" />
<text x="431.8" y="320.1" font-size="11" fill="#fff" font-family="Liberation Sans, sans-serif" textLength="9.4" lengthAdjust="spacingAndGlyphs" font-weight="bold" stroke="#fff" stroke-width="0.15" >212</text>
<path d="M266,83.3 L273.6,83.3 L340,181.6" fill="none" stroke="#ff0" stroke-width="1" shape-rendering="crispEdges"/>
<text x="269.6" y="83.2" font-size="10" fill="#fff" font-family="Liberation Sans, sans-serif" textLength="3.3" lengthAdjust="spacingAndGlyphs" text-anchor="middle" font-weight="bold" stroke="#fff" stroke-width="0.15" >1</text>
<path d="M333,83.3 L341.6,83.3 L345.6,145" fill="none" stroke="#ff0" stroke-width="1" shape-rendering="crispEdges"/>
<text x="337.4" y="83.2" font-size="10" fill="#fff" font-family="Liberation Sans, sans-serif" textLength="3.3" lengthAdjust="spacingAndGlyphs" text-anchor="middle" font-weight="bold" stroke="#fff" stroke-width="0.15" >2</text>
<path d="M361.2,83.3 L369.6,83.3 L387,127" fill="none" stroke="#ff0" stroke-width="1" shape-rendering="crispEdges"/>
<text x="365.6" y="83.2" font-size="10" fill="#fff" font-family="Liberation Sans, sans-serif" textLength="3.3" lengthAdjust="spacingAndGlyphs" text-anchor="middle" font-weight="bold" stroke="#fff" stroke-width="0.15" >3</text>
<path d="M470.8,83.3 L462.2,83.3 L443,121.6" fill="none" stroke="#ff0" stroke-width="1" shape-rendering="crispEdges"/>
<text x="466.6" y="83.2" font-size="10" fill="#fff" font-family="Liberation Sans, sans-serif" textLength="3.3" lengthAdjust="spacingAndGlyphs" text-anchor="middle" font-weight="bold" stroke="#fff" stroke-width="0.15" >4</text>
<path d="M487.8,83.3 L480.4,83.3 L469,120" fill="none" stroke="#ff0" stroke-width="1" shape-rendering="crispEdges"/>
<text x="484.2" y="83.2" font-size="10" fill="#fff" font-family="Liberation Sans, sans-serif" textLength="3.3" lengthAdjust="spacingAndGlyphs" text-anchor="middle" font-weight="bold" stroke="#fff" stroke-width="0.15" >5</text>
<path d="M524.8,83.3 L517,83.3 L491,135" fill="none" stroke="#ff0" stroke-width="1" shape-rendering="crispEdges"/>
<text x="521" y="83.2" font-size="10" fill="#fff" font-family="Liberation Sans, sans-serif" textLength="3.3" lengthAdjust="spacingAndGlyphs" text-anchor="middle" font-weight="bold" stroke="#fff" stroke-width="0.15" >6</text>
<path d="M636.8,175.6 L630,175.6 L460,182.4" fill="none" stroke="#ff0" stroke-width="1" shape-rendering="crispEdges"/>
<text x="632.7" y="175" font-size="10.4" fill="#fff" font-family="Liberation Sans, sans-serif" textLength="3.4" lengthAdjust="spacingAndGlyphs" text-anchor="middle" font-weight="bold" stroke="#fff" stroke-width="0.15" >7</text>
<path d="M636.8,213.2 L630,213.2 L467,220" fill="none" stroke="#ff0" stroke-width="1" shape-rendering="crispEdges"/>
<text x="632.7" y="213" font-size="9.6" fill="#fff" font-family="Liberation Sans, sans-serif" textLength="3.4" lengthAdjust="spacingAndGlyphs" text-anchor="middle" font-weight="bold" stroke="#fff" stroke-width="0.15" >8</text>
<path d="M293,556.4 L302,556.4 L435,531.4" fill="none" stroke="#ff0" stroke-width="1" shape-rendering="crispEdges"/>
<text x="296.6" y="556.2" font-size="10" fill="#fff" font-family="Liberation Sans, sans-serif" textLength="3.3" lengthAdjust="spacingAndGlyphs" text-anchor="middle" font-weight="bold" stroke="#fff" stroke-width="0.15" >9</text>
<rect x="339.1" y="180.7" width="1.8" height="1.8" fill="#fff" stroke="#fff" stroke-width="0" />
<rect x="386.1" y="126.1" width="1.8" height="1.8" fill="#fff" stroke="#fff" stroke-width="0" />
<rect x="442.1" y="120.7" width="1.8" height="1.8" fill="#fff" stroke="#fff" stroke-width="0" />
<rect x="468.1" y="119.1" width="1.8" height="1.8" fill="#fff" stroke="#fff" stroke-width="0" />
<rect x="490.1" y="134.1" width="1.8" height="1.8" fill="#fff" stroke="#fff" stroke-width="0" />
<rect x="459.1" y="181.5" width="1.8" height="1.8" fill="#fff" stroke="#fff" stroke-width="0" />
<rect x="466.1" y="219.1" width="1.8" height="1.8" fill="#fff" stroke="#fff" stroke-width="0" />
<rect x="434.1" y="530.5" width="1.8" height="1.8" fill="#fff" stroke="#fff" stroke-width="0" />
<line x1="247" y1="413.5" x2="596.6" y2="413.5" stroke="#fff" stroke-width="1" />
<line x1="247" y1="496.5" x2="596.6" y2="496.5" stroke="#fff" stroke-width="1" />
<path d="M284.5,413.3 V444.5 Q284.5,447.5 287.5,447.5 H302.4 A7.5,7.5 0 0 1 302.4,462.5 H287.5 Q284.5,462.5 284.5,465.5 V496.5" fill="none" stroke="#fff"/>
<path d="M596.5,413.3 V444.5 Q596.5,447.5 593.5,447.5 H575.6 A7.5,7.5 0 0 0 575.6,462.5 H593.5 Q596.5,462.5 596.5,465.5 V496.5" fill="none" stroke="#fff"/>
<line x1="328.5" y1="413.3" x2="328.5" y2="496.5" stroke="#fff" stroke-width="1" />
<line x1="550.5" y1="413.3" x2="550.5" y2="496.5" stroke="#fff" stroke-width="1" />
<line x1="251.5" y1="413.3" x2="251.5" y2="496.5" stroke="#fff" stroke-width="1" />
<path d="M250.4,418.5 L251.4,413.3 L252.4,418.5" fill="none" stroke="#fff" stroke-width="0.8" />
<path d="M250.4,491.5 L251.4,496.5 L252.4,491.5" fill="none" stroke="#fff" stroke-width="0.8" />
<text x="251" y="458" font-size="10" fill="#fff" font-family="Liberation Sans, sans-serif" textLength="7.1" lengthAdjust="spacingAndGlyphs" font-weight="bold" stroke="#fff" stroke-width="0.15" transform="rotate(-90 251 458)" >56</text>
<rect x="370.5" y="385.5" width="138.5" height="138" rx="4.5" fill="none" stroke="#00f" stroke-width="1.1" stroke-dasharray="9 1.5 2 1.5"/>
<circle cx="439.6" cy="454.6" r="13.9" fill="none" stroke="#00f" stroke-width="1.05" stroke-dasharray="3 1.3"/>
<circle cx="439.6" cy="454.6" r="22.3" fill="none" stroke="#00f" stroke-width="1.05" stroke-dasharray="4 1.6"/>
<circle cx="439.6" cy="454.6" r="29.9" fill="none" stroke="#00f" stroke-width="1.05" stroke-dasharray="4.5 1.6"/>
<circle cx="439.6" cy="454.6" r="33.6" fill="none" stroke="#00f" stroke-width="1.05" stroke-dasharray="4.5 1.6"/>
<circle cx="439.6" cy="454.6" r="44.6" fill="none" stroke="#00f" stroke-width="1.05" stroke-dasharray="5 1.8"/>
<circle cx="439.6" cy="454.6" r="52.2" fill="none" stroke="#00f" stroke-width="1.05" stroke-dasharray="5 1.8 1.2 1.8"/>
<circle cx="439.6" cy="454.6" r="59.3" fill="none" stroke="#00f" stroke-width="1.05" stroke-dasharray="5 1.8"/>
<line x1="356" y1="454.5" x2="523" y2="454.5" stroke="#00f" stroke-width="1.1" stroke-dasharray="16 1.5 2 1.5"/>
<line x1="439.5" y1="369" x2="439.5" y2="536" stroke="#00f" stroke-width="1.1" stroke-dasharray="16 1.5 2 1.5"/>
<line x1="381.8" y1="397" x2="497" y2="511.8" stroke="#00f" stroke-width="0.9" />
<line x1="497" y1="397" x2="381.8" y2="511.8" stroke="#00f" stroke-width="0.9" />
<circle cx="381.8" cy="397" r="5.5" fill="none" stroke="#00f" stroke-width="1.2" />
<line x1="371.3" y1="397.5" x2="388.3" y2="397.5" stroke="#00f" stroke-width="1" />
<line x1="381.5" y1="386.5" x2="381.5" y2="407.5" stroke="#00f" stroke-width="1" />
<circle cx="497" cy="397" r="5.5" fill="none" stroke="#00f" stroke-width="1.2" />
<line x1="486.5" y1="397.5" x2="507.5" y2="397.5" stroke="#00f" stroke-width="1" />
<line x1="497.5" y1="386.5" x2="497.5" y2="407.5" stroke="#00f" stroke-width="1" />
<circle cx="381.8" cy="511.4" r="5.5" fill="none" stroke="#00f" stroke-width="1.2" />
<line x1="371.3" y1="511.5" x2="388.3" y2="511.5" stroke="#00f" stroke-width="1" />
<line x1="381.5" y1="500.9" x2="381.5" y2="521.9" stroke="#00f" stroke-width="1" />
<circle cx="497" cy="511.4" r="5.5" fill="none" stroke="#00f" stroke-width="1.2" />
<line x1="486.5" y1="511.5" x2="507.5" y2="511.5" stroke="#00f" stroke-width="1" />
<line x1="497.5" y1="500.9" x2="497.5" y2="521.9" stroke="#00f" stroke-width="1" />
<circle cx="387.6" cy="454.6" r="1.4" fill="#00f" stroke="#00f" stroke-width="0" />
<circle cx="491" cy="454.6" r="1.4" fill="#00f" stroke="#00f" stroke-width="0" />
<circle cx="439.6" cy="506" r="1.4" fill="#00f" stroke="#00f" stroke-width="0" />
<circle cx="439.6" cy="454.6" r="12.2" fill="none" stroke="#fff" stroke-width="1.2" />
<circle cx="415.4" cy="430.4" r="5" fill="#00f" stroke="#00f" stroke-width="0" />
<line x1="408.9" y1="430.5" x2="421.9" y2="430.5" stroke="#00f" stroke-width="1" />
<line x1="415.5" y1="423.9" x2="415.5" y2="436.9" stroke="#00f" stroke-width="1" />
<line x1="413.9" y1="431.9" x2="417.4" y2="428.4" stroke="#fff" stroke-width="0.8" />
<circle cx="415.4" cy="430.4" r="7.6" fill="none" stroke="#fff" stroke-width="1.1" />
<circle cx="463.6" cy="430.4" r="5" fill="#00f" stroke="#00f" stroke-width="0" />
<line x1="457.1" y1="430.5" x2="470.1" y2="430.5" stroke="#00f" stroke-width="1" />
<line x1="463.5" y1="423.9" x2="463.5" y2="436.9" stroke="#00f" stroke-width="1" />
<line x1="462.1" y1="431.9" x2="465.6" y2="428.4" stroke="#fff" stroke-width="0.8" />
<circle cx="463.6" cy="430.4" r="7.6" fill="none" stroke="#fff" stroke-width="1.1" />
<circle cx="415.4" cy="478.6" r="5" fill="#00f" stroke="#00f" stroke-width="0" />
<line x1="408.9" y1="478.5" x2="421.9" y2="478.5" stroke="#00f" stroke-width="1" />
<line x1="415.5" y1="472.1" x2="415.5" y2="485.1" stroke="#00f" stroke-width="1" />
<line x1="413.9" y1="480.1" x2="417.4" y2="476.6" stroke="#fff" stroke-width="0.8" />
<circle cx="415.4" cy="478.6" r="7.6" fill="none" stroke="#fff" stroke-width="1.1" />
<circle cx="463.6" cy="478.6" r="5" fill="#00f" stroke="#00f" stroke-width="0" />
<line x1="457.1" y1="478.5" x2="470.1" y2="478.5" stroke="#00f" stroke-width="1" />
<line x1="463.5" y1="472.1" x2="463.5" y2="485.1" stroke="#00f" stroke-width="1" />
<line x1="462.1" y1="480.1" x2="465.6" y2="476.6" stroke="#fff" stroke-width="0.8" />
<circle cx="463.6" cy="478.6" r="7.6" fill="none" stroke="#fff" stroke-width="1.1" />
<circle cx="345.4" cy="454.6" r="9.4" fill="none" stroke="#fff" stroke-width="1.1" />
<circle cx="345.4" cy="454.6" r="6.6" fill="none" stroke="#fff" stroke-width="1" />
<path d="M349.9,457.2 L345.4,459.8 L340.9,457.2 L340.9,452 L345.4,449.4 L349.9,452 Z" fill="none" stroke="#fff" stroke-width="1.6" />
<line x1="345.5" y1="440" x2="345.5" y2="474.6" stroke="#0ff" stroke-width="1" />
<line x1="336" y1="454.5" x2="354.8" y2="454.5" stroke="#0ff" stroke-width="1" />
<circle cx="533.4" cy="454.6" r="9.4" fill="none" stroke="#fff" stroke-width="1.1" />
<circle cx="533.4" cy="454.6" r="6.6" fill="none" stroke="#fff" stroke-width="1" />
<path d="M537.9,457.2 L533.4,459.8 L528.9,457.2 L528.9,452 L533.4,449.4 L537.9,452 Z" fill="none" stroke="#fff" stroke-width="1.6" />
<line x1="533.5" y1="440" x2="533.5" y2="474.6" stroke="#0ff" stroke-width="1" />
<line x1="524" y1="454.5" x2="542.8" y2="454.5" stroke="#0ff" stroke-width="1" />
<path d="M388.69,403.69 A72,72 0 0 1 490.51,403.69" fill="none" stroke="#fff" stroke-width="1.1"/>
<line x1="388.69" y1="403.69" x2="392.69" y2="401.49" stroke="#fff" stroke-width="2" />
<line x1="490.51" y1="403.69" x2="486.51" y2="401.49" stroke="#fff" stroke-width="2" />
<line x1="381.8" y1="397" x2="388.69" y2="403.69" stroke="#00f" stroke-width="0.9" />
<line x1="497" y1="397" x2="490.51" y2="403.69" stroke="#00f" stroke-width="0.9" />
<text x="434" y="382.1" font-size="11" fill="#fff" font-family="Liberation Sans, sans-serif" textLength="7.9" lengthAdjust="spacingAndGlyphs" font-weight="bold" stroke="#fff" stroke-width="0.15" >90°</text>
<path d="M413.5,469.8 L534,397.4 L565,397.4" fill="none" stroke="#fff" stroke-width="1" shape-rendering="crispEdges"/>
<rect x="412.6" y="468.9" width="1.8" height="1.8" fill="#fff" stroke="#fff" stroke-width="0" />
<text x="534" y="397.1" font-size="11" fill="#fff" font-family="Liberation Sans, sans-serif" textLength="26" lengthAdjust="spacingAndGlyphs" font-weight="bold" stroke="#fff" stroke-width="0.15" >Φ48H7/f6</text>
<path d="M431.5,496.5 L431.5,538 L433.8,540.5 L444.2,540.5 L446.5,538 L446.5,496.5" fill="none" stroke="#fff" stroke-width="1" />
<line x1="431.6" y1="537.5" x2="446.4" y2="537.5" stroke="#fff" stroke-width="1" />
<text x="726.4" y="359.6" font-size="7" fill="#fff" font-family="Liberation Sans, Noto Sans CJK SC, sans-serif" textLength="15.2" lengthAdjust="spacingAndGlyphs" font-weight="bold" stroke="#fff" stroke-width="0.25" >技术要求</text>
<text x="705" y="369.2" font-size="7" fill="#fff" font-family="Liberation Sans, Noto Sans CJK SC, sans-serif" textLength="71" lengthAdjust="spacingAndGlyphs" font-weight="bold" stroke="#fff" stroke-width="0.25" >各压紧尺寸在装配时不产生干涉</text>
<text x="705" y="378.6" font-size="7" fill="#fff" font-family="Liberation Sans, Noto Sans CJK SC, sans-serif" textLength="77.3" lengthAdjust="spacingAndGlyphs" font-weight="bold" stroke="#fff" stroke-width="0.25" >在装配前所有零部件必须清洗去毛刺</text>
<line x1="622.6" y1="443.5" x2="886.6" y2="443.5" stroke="#ff0" stroke-width="1.1" />
<line x1="622.6" y1="453.5" x2="886.6" y2="453.5" stroke="#ff0" stroke-width="1.1" />
<line x1="622.6" y1="463.5" x2="886.6" y2="463.5" stroke="#ff0" stroke-width="1.1" />
<line x1="622.6" y1="474.5" x2="886.6" y2="474.5" stroke="#ff0" stroke-width="1.1" />
<line x1="622.6" y1="484.5" x2="886.6" y2="484.5" stroke="#ff0" stroke-width="1.1" />
<line x1="622.6" y1="494.5" x2="886.6" y2="494.5" stroke="#ff0" stroke-width="1.1" />
<line x1="622.6" y1="505.5" x2="886.6" y2="505.5" stroke="#ff0" stroke-width="1.1" />
<line x1="622.6" y1="515.5" x2="886.6" y2="515.5" stroke="#ff0" stroke-width="1.1" />
<line x1="622.6" y1="525.5" x2="886.6" y2="525.5" stroke="#ff0" stroke-width="1.1" />
<line x1="622.6" y1="535.5" x2="886.6" y2="535.5" stroke="#ff0" stroke-width="1.1" />
<line x1="622.6" y1="556.5" x2="886.6" y2="556.5" stroke="#ff0" stroke-width="1.1" />
<line x1="622.5" y1="443.4" x2="622.5" y2="556" stroke="#ff0" stroke-width="1.1" />
<line x1="636.5" y1="443.4" x2="636.5" y2="556" stroke="#ff0" stroke-width="1.1" />
<line x1="695.5" y1="443.4" x2="695.5" y2="556" stroke="#ff0" stroke-width="1.1" />
<line x1="754.5" y1="443.4" x2="754.5" y2="556" stroke="#ff0" stroke-width="1.1" />
<line x1="768.5" y1="443.4" x2="768.5" y2="556" stroke="#ff0" stroke-width="1.1" />
<line x1="805.5" y1="443.4" x2="805.5" y2="556" stroke="#ff0" stroke-width="1.1" />
<line x1="886.5" y1="443.4" x2="886.5" y2="556" stroke="#ff0" stroke-width="1.1" />
<line x1="622.5" y1="443.4" x2="622.5" y2="614.4" stroke="#fff" stroke-width="1" />
<text x="629.1" y="452.2" font-size="11" fill="#fff" font-family="Liberation Sans, sans-serif" textLength="4.2" lengthAdjust="spacingAndGlyphs" text-anchor="middle" stroke="#fff" stroke-width="0.2" >9</text>
<text x="697" y="451.4" font-size="8" fill="#fff" font-family="Liberation Sans, Noto Sans CJK SC, sans-serif" textLength="29" lengthAdjust="spacingAndGlyphs" font-weight="bold" stroke="#fff" stroke-width="0.2" >夹紧螺栓</text>
<text x="760.6" y="452.2" font-size="11" fill="#fff" font-family="Liberation Sans, sans-serif" textLength="4" lengthAdjust="spacingAndGlyphs" text-anchor="middle" stroke="#fff" stroke-width="0.15" >1</text>
<text x="783" y="452.2" font-size="11" fill="#fff" font-family="Liberation Sans, sans-serif" textLength="7.4" lengthAdjust="spacingAndGlyphs" stroke="#fff" stroke-width="0.15" >45</text>
<text x="629.1" y="462.4" font-size="11" fill="#fff" font-family="Liberation Sans, sans-serif" textLength="4.2" lengthAdjust="spacingAndGlyphs" text-anchor="middle" stroke="#fff" stroke-width="0.2" >8</text>
<text x="697" y="461.6" font-size="8" fill="#fff" font-family="Liberation Sans, Noto Sans CJK SC, sans-serif" textLength="14.5" lengthAdjust="spacingAndGlyphs" font-weight="bold" stroke="#fff" stroke-width="0.2" >手柄</text>
<text x="760.6" y="462.4" font-size="11" fill="#fff" font-family="Liberation Sans, sans-serif" textLength="4" lengthAdjust="spacingAndGlyphs" text-anchor="middle" stroke="#fff" stroke-width="0.15" >1</text>
<text x="783" y="462.4" font-size="11" fill="#fff" font-family="Liberation Sans, sans-serif" textLength="7.4" lengthAdjust="spacingAndGlyphs" stroke="#fff" stroke-width="0.15" >45</text>
<text x="629.1" y="472.8" font-size="11" fill="#fff" font-family="Liberation Sans, sans-serif" textLength="4.2" lengthAdjust="spacingAndGlyphs" text-anchor="middle" stroke="#fff" stroke-width="0.2" >7</text>
<text x="697" y="472" font-size="8" fill="#fff" font-family="Liberation Sans, Noto Sans CJK SC, sans-serif" textLength="14.5" lengthAdjust="spacingAndGlyphs" font-weight="bold" stroke="#fff" stroke-width="0.2" >垫块</text>
<text x="760.6" y="472.8" font-size="11" fill="#fff" font-family="Liberation Sans, sans-serif" textLength="4" lengthAdjust="spacingAndGlyphs" text-anchor="middle" stroke="#fff" stroke-width="0.15" >1</text>
<text x="776" y="472.8" font-size="11" fill="#fff" font-family="Liberation Sans, sans-serif" textLength="17" lengthAdjust="spacingAndGlyphs" stroke="#fff" stroke-width="0.15" >GCr15</text>
<text x="629.1" y="483.2" font-size="11" fill="#fff" font-family="Liberation Sans, sans-serif" textLength="4.2" lengthAdjust="spacingAndGlyphs" text-anchor="middle" stroke="#fff" stroke-width="0.2" >6</text>
<text x="697" y="482.4" font-size="8" fill="#fff" font-family="Liberation Sans, Noto Sans CJK SC, sans-serif" textLength="29" lengthAdjust="spacingAndGlyphs" font-weight="bold" stroke="#fff" stroke-width="0.2" >定位销B</text>
<text x="760.6" y="483.2" font-size="11" fill="#fff" font-family="Liberation Sans, sans-serif" textLength="4" lengthAdjust="spacingAndGlyphs" text-anchor="middle" stroke="#fff" stroke-width="0.15" >1</text>
<text x="776" y="483.2" font-size="11" fill="#fff" font-family="Liberation Sans, sans-serif" textLength="17" lengthAdjust="spacingAndGlyphs" stroke="#fff" stroke-width="0.15" >GCr15</text>
<text x="629.1" y="493.4" font-size="11" fill="#fff" font-family="Liberation Sans, sans-serif" textLength="4.2" lengthAdjust="spacingAndGlyphs" text-anchor="middle" stroke="#fff" stroke-width="0.2" >5</text>
<text x="697" y="492.6" font-size="8" fill="#fff" font-family="Liberation Sans, Noto Sans CJK SC, sans-serif" textLength="21.75" lengthAdjust="spacingAndGlyphs" font-weight="bold" stroke="#fff" stroke-width="0.2" >钻模套</text>
<text x="760.6" y="493.4" font-size="11" fill="#fff" font-family="Liberation Sans, sans-serif" textLength="5" lengthAdjust="spacingAndGlyphs" text-anchor="middle" stroke="#fff" stroke-width="0.15" >4</text>
<text x="776" y="493.4" font-size="11" fill="#fff" font-family="Liberation Sans, sans-serif" textLength="17" lengthAdjust="spacingAndGlyphs" stroke="#fff" stroke-width="0.15" >GCr15</text>
<text x="629.1" y="503.8" font-size="11" fill="#fff" font-family="Liberation Sans, sans-serif" textLength="4.2" lengthAdjust="spacingAndGlyphs" text-anchor="middle" stroke="#fff" stroke-width="0.2" >4</text>
<text x="697" y="503" font-size="8" fill="#fff" font-family="Liberation Sans, Noto Sans CJK SC, sans-serif" textLength="29" lengthAdjust="spacingAndGlyphs" font-weight="bold" stroke="#fff" stroke-width="0.2" >定位销A</text>
<text x="760.6" y="503.8" font-size="11" fill="#fff" font-family="Liberation Sans, sans-serif" textLength="4" lengthAdjust="spacingAndGlyphs" text-anchor="middle" stroke="#fff" stroke-width="0.15" >1</text>
<text x="776" y="503.8" font-size="11" fill="#fff" font-family="Liberation Sans, sans-serif" textLength="17" lengthAdjust="spacingAndGlyphs" stroke="#fff" stroke-width="0.15" >GCr15</text>
<text x="629.1" y="514.2" font-size="11" fill="#fff" font-family="Liberation Sans, sans-serif" textLength="4.2" lengthAdjust="spacingAndGlyphs" text-anchor="middle" stroke="#fff" stroke-width="0.2" >3</text>
<text x="697" y="513.4" font-size="8" fill="#fff" font-family="Liberation Sans, Noto Sans CJK SC, sans-serif" textLength="21.75" lengthAdjust="spacingAndGlyphs" font-weight="bold" stroke="#fff" stroke-width="0.2" >钻模板</text>
<text x="760.6" y="514.2" font-size="11" fill="#fff" font-family="Liberation Sans, sans-serif" textLength="4" lengthAdjust="spacingAndGlyphs" text-anchor="middle" stroke="#fff" stroke-width="0.15" >1</text>
<text x="783" y="514.2" font-size="11" fill="#fff" font-family="Liberation Sans, sans-serif" textLength="7.4" lengthAdjust="spacingAndGlyphs" stroke="#fff" stroke-width="0.15" >45</text>
<text x="629.1" y="524.2" font-size="11" fill="#fff" font-family="Liberation Sans, sans-serif" textLength="4.2" lengthAdjust="spacingAndGlyphs" text-anchor="middle" stroke="#fff" stroke-width="0.2" >2</text>
<text x="697" y="523.4" font-size="8" fill="#fff" font-family="Liberation Sans, Noto Sans CJK SC, sans-serif" textLength="14.5" lengthAdjust="spacingAndGlyphs" font-weight="bold" stroke="#fff" stroke-width="0.2" >螺栓</text>
<text x="760.6" y="524.2" font-size="11" fill="#fff" font-family="Liberation Sans, sans-serif" textLength="5" lengthAdjust="spacingAndGlyphs" text-anchor="middle" stroke="#fff" stroke-width="0.15" >2</text>
<text x="807" y="524.2" font-size="11" fill="#fff" font-family="Liberation Sans, sans-serif" textLength="28" lengthAdjust="spacingAndGlyphs" stroke="#fff" stroke-width="0.15" >GB70-85</text>
<text x="629.1" y="534.4" font-size="11" fill="#fff" font-family="Liberation Sans, sans-serif" textLength="4.2" lengthAdjust="spacingAndGlyphs" text-anchor="middle" stroke="#fff" stroke-width="0.2" >1</text>
<text x="697" y="533.6" font-size="8" fill="#fff" font-family="Liberation Sans, Noto Sans CJK SC, sans-serif" textLength="21.75" lengthAdjust="spacingAndGlyphs" font-weight="bold" stroke="#fff" stroke-width="0.2" >夹具体</text>
<text x="760.6" y="534.4" font-size="11" fill="#fff" font-family="Liberation Sans, sans-serif" textLength="4" lengthAdjust="spacingAndGlyphs" text-anchor="middle" stroke="#fff" stroke-width="0.15" >1</text>
<text x="624" y="549.6" font-size="7.5" fill="#fff" font-family="Liberation Sans, Noto Sans CJK SC, sans-serif" textLength="11" lengthAdjust="spacingAndGlyphs" font-weight="bold" stroke="#fff" stroke-width="0.2" >序号</text>
<text x="647" y="549.6" font-size="7.5" fill="#fff" font-family="Liberation Sans, Noto Sans CJK SC, sans-serif" textLength="5.5" lengthAdjust="spacingAndGlyphs" font-weight="bold" stroke="#fff" stroke-width="0.2" >图</text>
<text x="677" y="549.6" font-size="7.5" fill="#fff" font-family="Liberation Sans, Noto Sans CJK SC, sans-serif" textLength="5.5" lengthAdjust="spacingAndGlyphs" font-weight="bold" stroke="#fff" stroke-width="0.2" >号</text>
<text x="706" y="549.6" font-size="7.5" fill="#fff" font-family="Liberation Sans, Noto Sans CJK SC, sans-serif" textLength="5.5" lengthAdjust="spacingAndGlyphs" font-weight="bold" stroke="#fff" stroke-width="0.2" >名</text>
<text x="735" y="549.6" font-size="7.5" fill="#fff" font-family="Liberation Sans, Noto Sans CJK SC, sans-serif" textLength="5.5" lengthAdjust="spacingAndGlyphs" font-weight="bold" stroke="#fff" stroke-width="0.2" >称</text>
<text x="756" y="549.6" font-size="7.5" fill="#fff" font-family="Liberation Sans, Noto Sans CJK SC, sans-serif" textLength="11" lengthAdjust="spacingAndGlyphs" font-weight="bold" stroke="#fff" stroke-width="0.2" >数量</text>
<text x="774" y="549.6" font-size="7.5" fill="#fff" font-family="Liberation Sans, Noto Sans CJK SC, sans-serif" textLength="5.5" lengthAdjust="spacingAndGlyphs" font-weight="bold" stroke="#fff" stroke-width="0.2" >材</text>
<text x="793" y="549.6" font-size="7.5" fill="#fff" font-family="Liberation Sans, Noto Sans CJK SC, sans-serif" textLength="5.5" lengthAdjust="spacingAndGlyphs" font-weight="bold" stroke="#fff" stroke-width="0.2" >料</text>
<text x="819" y="549.6" font-size="7.5" fill="#fff" font-family="Liberation Sans, Noto Sans CJK SC, sans-serif" textLength="6.5" lengthAdjust="spacingAndGlyphs" font-weight="bold" stroke="#fff" stroke-width="0.2" >备</text>
<text x="859" y="549.6" font-size="7.5" fill="#fff" font-family="Liberation Sans, Noto Sans CJK SC, sans-serif" textLength="6.5" lengthAdjust="spacingAndGlyphs" font-weight="bold" stroke="#fff" stroke-width="0.2" >注</text>
<line x1="622.6" y1="557.5" x2="886.6" y2="557.5" stroke="#fff" stroke-width="1" />
<line x1="622.6" y1="614.5" x2="886.6" y2="614.5" stroke="#fff" stroke-width="1" />
<line x1="622.6" y1="562.5" x2="710.6" y2="562.5" stroke="#fff" stroke-width="1" />
<line x1="622.6" y1="567.5" x2="710.6" y2="567.5" stroke="#fff" stroke-width="1" />
<line x1="622.6" y1="573.5" x2="710.6" y2="573.5" stroke="#fff" stroke-width="1" />
<line x1="622.6" y1="579.5" x2="710.6" y2="579.5" stroke="#fff" stroke-width="1" />
<line x1="622.6" y1="585.5" x2="710.6" y2="585.5" stroke="#fff" stroke-width="1" />
<line x1="622.6" y1="592.5" x2="710.6" y2="592.5" stroke="#fff" stroke-width="1" />
<line x1="622.6" y1="600.5" x2="710.6" y2="600.5" stroke="#fff" stroke-width="1" />
<line x1="622.6" y1="607.5" x2="710.6" y2="607.5" stroke="#fff" stroke-width="1" />
<line x1="633.5" y1="557" x2="633.5" y2="585" stroke="#fff" stroke-width="1" />
<line x1="644.5" y1="557" x2="644.5" y2="585" stroke="#fff" stroke-width="1" />
<line x1="673.5" y1="557" x2="673.5" y2="585" stroke="#fff" stroke-width="1" />
<line x1="695.5" y1="557" x2="695.5" y2="585" stroke="#fff" stroke-width="1" />
<line x1="644.5" y1="585" x2="644.5" y2="614.4" stroke="#fff" stroke-width="1" />
<line x1="666.5" y1="585" x2="666.5" y2="614.4" stroke="#fff" stroke-width="1" />
<line x1="688.5" y1="585" x2="688.5" y2="614.4" stroke="#fff" stroke-width="1" />
<line x1="710.5" y1="557" x2="710.5" y2="614.4" stroke="#fff" stroke-width="1" />
<line x1="710.6" y1="600.5" x2="886.6" y2="600.5" stroke="#fff" stroke-width="1" />
<line x1="798.5" y1="557" x2="798.5" y2="614.4" stroke="#fff" stroke-width="1" />
<line x1="798.4" y1="576.5" x2="886.6" y2="576.5" stroke="#fff" stroke-width="1" />
<line x1="798.4" y1="582.5" x2="886.6" y2="582.5" stroke="#fff" stroke-width="1" />
<line x1="798.4" y1="594.5" x2="886.6" y2="594.5" stroke="#fff" stroke-width="1" />
<line x1="809.5" y1="582.4" x2="809.5" y2="594.4" stroke="#fff" stroke-width="1" />
<line x1="821.5" y1="582.4" x2="821.5" y2="594.4" stroke="#fff" stroke-width="1" />
<line x1="834.5" y1="582.4" x2="834.5" y2="594.4" stroke="#fff" stroke-width="1" />
<line x1="852.5" y1="582.4" x2="852.5" y2="594.4" stroke="#fff" stroke-width="1" />
<line x1="868.5" y1="582.4" x2="868.5" y2="594.4" stroke="#fff" stroke-width="1" />
<line x1="834.5" y1="576.4" x2="834.5" y2="582.4" stroke="#fff" stroke-width="1" />
<line x1="852.5" y1="576.4" x2="852.5" y2="582.4" stroke="#fff" stroke-width="1" />
<line x1="868.5" y1="576.4" x2="868.5" y2="582.4" stroke="#fff" stroke-width="1" />
<line x1="842.5" y1="594.4" x2="842.5" y2="600" stroke="#fff" stroke-width="1" />
<text x="754" y="581.8" font-size="8.5" fill="#fff" font-family="Liberation Sans, Noto Sans CJK SC, sans-serif" textLength="18" lengthAdjust="spacingAndGlyphs" text-anchor="middle" font-weight="bold" stroke="#fff" stroke-width="0.3" >前端盖</text>
<text x="711.6" y="611" font-size="8.5" fill="#fff" font-family="Liberation Sans, sans-serif" textLength="14.5" lengthAdjust="spacingAndGlyphs" font-weight="bold" stroke="#fff" stroke-width="0.3" >HT.45</text>
<text x="624" y="584.3" font-size="4.6" fill="#fff" font-family="Liberation Sans, Noto Sans CJK SC, sans-serif" textLength="8" lengthAdjust="spacingAndGlyphs" font-weight="bold" stroke="#fff" stroke-width="0.2" >标记</text>
<text x="634.4" y="584.3" font-size="4.6" fill="#fff" font-family="Liberation Sans, Noto Sans CJK SC, sans-serif" textLength="8" lengthAdjust="spacingAndGlyphs" font-weight="bold" stroke="#fff" stroke-width="0.2" >处数</text>
<text x="650" y="584.3" font-size="4.6" fill="#fff" font-family="Liberation Sans, Noto Sans CJK SC, sans-serif" textLength="16" lengthAdjust="spacingAndGlyphs" font-weight="bold" stroke="#fff" stroke-width="0.2" >更改文件号</text>
<text x="679" y="584.3" font-size="4.6" fill="#fff" font-family="Liberation Sans, Noto Sans CJK SC, sans-serif" textLength="9" lengthAdjust="spacingAndGlyphs" font-weight="bold" stroke="#fff" stroke-width="0.2" >签 字</text>
<text x="697.5" y="584.3" font-size="4.6" fill="#fff" font-family="Liberation Sans, Noto Sans CJK SC, sans-serif" textLength="10" lengthAdjust="spacingAndGlyphs" font-weight="bold" stroke="#fff" stroke-width="0.2" >日 期</text>
<text x="627" y="591.2" font-size="4.6" fill="#fff" font-family="Liberation Sans, Noto Sans CJK SC, sans-serif" textLength="10" lengthAdjust="spacingAndGlyphs" font-weight="bold" stroke="#fff" stroke-width="0.2" >设 计</text>
<text x="627" y="598.8" font-size="4.6" fill="#fff" font-family="Liberation Sans, Noto Sans CJK SC, sans-serif" textLength="10" lengthAdjust="spacingAndGlyphs" font-weight="bold" stroke="#fff" stroke-width="0.2" >校 对</text>
<text x="627" y="606.2" font-size="4.6" fill="#fff" font-family="Liberation Sans, Noto Sans CJK SC, sans-serif" textLength="10" lengthAdjust="spacingAndGlyphs" font-weight="bold" stroke="#fff" stroke-width="0.2" >审 核</text>
<text x="627" y="613.4" font-size="4.6" fill="#fff" font-family="Liberation Sans, Noto Sans CJK SC, sans-serif" textLength="10" lengthAdjust="spacingAndGlyphs" font-weight="bold" stroke="#fff" stroke-width="0.2" >工 艺</text>
<text x="671" y="591.2" font-size="4.6" fill="#fff" font-family="Liberation Sans, Noto Sans CJK SC, sans-serif" textLength="11" lengthAdjust="spacingAndGlyphs" font-weight="bold" stroke="#fff" stroke-width="0.2" >标准化</text>
<text x="671" y="606.2" font-size="4.6" fill="#fff" font-family="Liberation Sans, Noto Sans CJK SC, sans-serif" textLength="9" lengthAdjust="spacingAndGlyphs" font-weight="bold" stroke="#fff" stroke-width="0.2" >批 准</text>
<text x="671" y="613.4" font-size="4.6" fill="#fff" font-family="Liberation Sans, Noto Sans CJK SC, sans-serif" textLength="9" lengthAdjust="spacingAndGlyphs" font-weight="bold" stroke="#fff" stroke-width="0.2" >日 期</text>
<text x="810" y="581.6" font-size="4.6" fill="#fff" font-family="Liberation Sans, Noto Sans CJK SC, sans-serif" textLength="11" lengthAdjust="spacingAndGlyphs" font-weight="bold" stroke="#fff" stroke-width="0.2" >图样标记</text>
<text x="837" y="581.6" font-size="4.6" fill="#fff" font-family="Liberation Sans, Noto Sans CJK SC, sans-serif" textLength="11" lengthAdjust="spacingAndGlyphs" font-weight="bold" stroke="#fff" stroke-width="0.2" >数 量</text>
<text x="854.5" y="581.6" font-size="4.6" fill="#fff" font-family="Liberation Sans, Noto Sans CJK SC, sans-serif" textLength="11" lengthAdjust="spacingAndGlyphs" font-weight="bold" stroke="#fff" stroke-width="0.2" >重 量</text>
<text x="871" y="581.6" font-size="4.6" fill="#fff" font-family="Liberation Sans, Noto Sans CJK SC, sans-serif" textLength="12" lengthAdjust="spacingAndGlyphs" font-weight="bold" stroke="#fff" stroke-width="0.2" >比 例</text>
<text x="855" y="591.6" font-size="7.5" fill="#fff" font-family="Liberation Sans, sans-serif" textLength="7" lengthAdjust="spacingAndGlyphs" font-weight="bold" stroke="#fff" stroke-width="0.3" >1:1</text>
<text x="809" y="599.4" font-size="4.6" fill="#fff" font-family="Liberation Sans, Noto Sans CJK SC, sans-serif" textLength="3" lengthAdjust="spacingAndGlyphs" font-weight="bold" stroke="#fff" stroke-width="0.2" >共</text>
<text x="825" y="599.4" font-size="4.6" fill="#fff" font-family="Liberation Sans, Noto Sans CJK SC, sans-serif" textLength="3" lengthAdjust="spacingAndGlyphs" font-weight="bold" stroke="#fff" stroke-width="0.2" >张</text>
<text x="853" y="599.4" font-size="4.6" fill="#fff" font-family="Liberation Sans, Noto Sans CJK SC, sans-serif" textLength="3" lengthAdjust="spacingAndGlyphs" font-weight="bold" stroke="#fff" stroke-width="0.2" >第</text>
<text x="870" y="599.4" font-size="4.6" fill="#fff" font-family="Liberation Sans, Noto Sans CJK SC, sans-serif" textLength="3" lengthAdjust="spacingAndGlyphs" font-weight="bold" stroke="#fff" stroke-width="0.2" >张</text>
</g>
<g filter="url(#nf)">
<rect x="0" y="0" width="915" height="13" fill="#f0f0f0"/>
<rect x="655" y="0" width="260" height="11.8" fill="#fff"/>
<rect x="0" y="12" width="915" height="1" fill="#f6f6f6"/>
<rect x="0" y="13" width="915" height="1" fill="#a6a6a6"/>
<rect x="0" y="14" width="915" height="1" fill="#f2f2f2"/>
<rect x="0" y="15" width="915" height="1" fill="#8c8c8c"/>
<rect x="0" y="16" width="915" height="1" fill="#2a2a2a"/>
<rect x="47" y="0" width="1" height="11" fill="#050505"/>
<rect x="145" y="0" width="1" height="11" fill="#050505"/>
<rect x="266" y="0" width="1" height="11" fill="#050505"/>
<rect x="344" y="0" width="1" height="11" fill="#050505"/>
<rect x="442" y="0" width="1" height="11" fill="#050505"/>
<rect x="586" y="0" width="1" height="11" fill="#050505"/>
<rect x="615.6" y="0" width="1" height="12.4" fill="#d8d8d8"/><rect x="616.6" y="0" width="1.6" height="12.4" fill="#fafafa"/><rect x="621" y="0" width="1" height="12.4" fill="#fff"/><rect x="622" y="0" width="1.1" height="12.4" fill="#a4a4a4"/><rect x="625.4" y="0" width="1" height="12.4" fill="#fff"/><rect x="626.4" y="0" width="1.1" height="12.4" fill="#a4a4a4"/>
<path d="M7.6,0 H16.8 L14.6,3 L9.4,8.6 L6,7.4 Z" fill="#e8c033"/><path d="M2.8,0 H8 L5.4,9.7 Z" fill="#e4edf5" stroke="#c9a452" stroke-width="0.9"/><path d="M9.6,1.4 Q10.2,5.4 13.4,6.6" fill="none" stroke="#1b3a78" stroke-width="2"/><path d="M12.4,4.4 L17.8,7.2 L12.6,9.6 Z" fill="#1b3a78"/>
<rect x="26.4" y="-1" width="13" height="9.5" rx="0.8" fill="#3f7ad6" stroke="#24479c" stroke-width="0.7"/><rect x="29.4" y="-1" width="7.8" height="3.6" fill="#e2ecf4" stroke="#7aa0d8" stroke-width="0.5"/><rect x="28.8" y="5" width="7.4" height="3.4" fill="#e6ecf4"/><rect x="30.8" y="5.4" width="1.2" height="3" fill="#1c3c80"/>
<path d="M56,3 Q58,-1 63,0 L68,1 Q70,3 68,5 L63,8 Q59,9 56,7 Z" fill="#d9e0ef" stroke="#34468e" stroke-width="0.9"/>
<path d="M59,0 L65,-1 L67,3 L61,5 Z" fill="#fff" stroke="#8090c0" stroke-width="0.5"/>
<rect x="77.5" y="-1" width="11" height="7.2" fill="#cfe0f4" stroke="#3f73d4" stroke-width="0.9"/>
<line x1="84.5" y1="5" x2="80.5" y2="9.2" stroke="#c98c3a" stroke-width="2" stroke-linecap="round"/><circle cx="87" cy="1.8" r="3.8" fill="#c4def4" stroke="#5a84b4" stroke-width="1.2"/>
<path d="M100.5,3 Q102.5,-1 107.5,0 L112.5,1 Q114.5,3 112.5,5 L107.5,8 Q103.5,9 100.5,7 Z" fill="#d9e0ef" stroke="#34468e" stroke-width="0.9"/>
<path d="M103.5,0 L109.5,-1 L111.5,3 L105.5,5 Z" fill="#fff" stroke="#8090c0" stroke-width="0.5"/>
<path d="M104,0 L110,-1 L111.5,3 L106,4 Z" fill="#f2d23c" stroke="#a88418" stroke-width="0.6"/>
<path d="M123.5,0 H136 V5 L130,9.3 L123.5,6 Z" fill="#dde3ee" stroke="#a8b0c4" stroke-width="0.6"/><circle cx="133" cy="1.5" r="5.2" fill="#2b69c9"/><path d="M128.5,0 Q133,5 138,1" stroke="#d4382c" stroke-width="1.2" fill="none"/><path d="M131,-1 Q133,3 131.5,6" stroke="#58b848" stroke-width="1.2" fill="none"/>
<path d="M152,0.8 L162,3.2 M154,3.6 L163,0.6" stroke="#27356f" stroke-width="1.4" fill="none"/><circle cx="165" cy="0.8" r="2" fill="none" stroke="#1a2668" stroke-width="1.3"/><circle cx="165.4" cy="5.2" r="2.1" fill="none" stroke="#1a2668" stroke-width="1.3"/>
<rect x="175.5" y="-1" width="9" height="6.5" fill="#cfe0f4" stroke="#2f63c4" stroke-width="1"/><rect x="178.5" y="1" width="11.6" height="7.6" fill="#d4e4f6" stroke="#2f63c4" stroke-width="1"/>
<path d="M198.5,0 H211 L212.5,6 L203,9 L199,7 Z" fill="#e8c568" stroke="#c49a38" stroke-width="0.8"/><rect x="202.6" y="-1" width="8.4" height="5.2" fill="#cfe0f4" stroke="#2f63c4" stroke-width="0.9"/>
<path d="M222.5,7.2 L226,3.5 L231,0 L234.8,0 L229.5,5.4 Z" fill="#2b2b2b"/><path d="M230.5,0 L235,-1 L234.6,1" fill="#c47a44"/>
<path d="M252,3.5 L256,-1 L259,0.5 L255,5 Z" fill="#f0e04a" stroke="#3a3a3a" stroke-width="0.7"/><rect x="245.6" y="2.6" width="7" height="6" fill="#f28a5c" stroke="#2050c4" stroke-width="1"/><rect x="244" y="7" width="2.6" height="2.6" fill="#0a6cf0"/>
<path d="M276.4,-1 H279.8 V4.4 H283 L278,9.6 L273,4.4 H276.4 Z" fill="#1c3f80"/>
<path d="M316.4,-1 H319.8 V4.4 H323 L318,9.6 L313,4.4 H316.4 Z" fill="#b9b9c3"/>
<path d="M297,0 H302.6 L299.8,2.6 Z" fill="#00008b"/><path d="M333,0 H339 L336,2.8 Z" fill="#cfcfdc"/>
<path d="M351.5,0 H360 L363,4.5 L359.5,7.6 Q353.5,5.5 351.5,0 Z" fill="#e2959e"/><path d="M360.4,6.4 L364,3.8 L367,6.6 L366.6,9.6 H361.4 Z" fill="#1d4e92"/>
<line x1="381.76" y1="3.96" x2="386.26" y2="8.16" stroke="#c98c3a" stroke-width="2" stroke-linecap="round"/>
<circle cx="379" cy="1.2" r="4.6" fill="#c4def4" stroke="#4a6c98" stroke-width="1.3"/>
<rect x="385.6" y="0" width="4.4" height="1" fill="#1c3c88"/>
<line x1="404.26" y1="3.96" x2="408.76" y2="8.16" stroke="#c98c3a" stroke-width="2" stroke-linecap="round"/>
<circle cx="401.5" cy="1.2" r="4.6" fill="#c4def4" stroke="#4a6c98" stroke-width="1.3"/>
<rect x="399.5" y="-1" width="4" height="2.6" fill="none" stroke="#1c3c88" stroke-width="0.9"/><path d="M413,6.4 V9.6 H409.2 Z" fill="#111"/>
<line x1="427.56" y1="3.96" x2="432.06" y2="8.16" stroke="#c98c3a" stroke-width="2" stroke-linecap="round"/>
<circle cx="424.8" cy="1.2" r="4.6" fill="#c4def4" stroke="#4a6c98" stroke-width="1.3"/>
<rect x="423" y="0" width="5" height="1.2" fill="#1c3c88"/>
<path d="M450,0 H456 V2 H450 Z" fill="#e8d070"/><path d="M456,0 Q460,-1 463,1 L459,2.6 Z" fill="#e2a090"/><path d="M450,3.6 Q453,5 456,3.6 M450,6.6 Q453,8 456,6.6" stroke="#4a78c0" stroke-width="1.2" fill="none"/><path d="M459.4,9.4 L462.4,1.6 L465.6,9.4 M460.6,6.6 H464.4" stroke="#31447c" stroke-width="1.2" fill="none"/>
<rect x="472.4" y="-1" width="15" height="10.4" fill="#dfe9f6" stroke="#2756b8" stroke-width="1.2"/><line x1="477" y1="-1" x2="477" y2="9.4" stroke="#2756b8" stroke-width="1"/><rect x="480.6" y="3.6" width="4" height="3.6" fill="#f4e23c" stroke="#3a4a88" stroke-width="0.6"/><rect x="479.5" y="0" width="2.2" height="2" fill="#f4e23c"/><rect x="483.6" y="0" width="2.2" height="2" fill="#f4e23c"/><path d="M473.6,1 h2 M473.6,3.2 h2 M473.6,5.4 h2 M473.6,7.6 h2" stroke="#e8c830" stroke-width="1"/>
<rect x="495.4" y="-1" width="8.6" height="10" fill="#dfe9f6" stroke="#2756b8" stroke-width="1.1"/><path d="M504,0 L507,1.4 V9 H504" fill="#c9d8ee" stroke="#2756b8" stroke-width="0.9"/><rect x="497.8" y="0.6" width="2.2" height="2.2" fill="#f4e23c"/><rect x="497.8" y="4.4" width="2.4" height="2.4" fill="#5ac8c8"/><path d="M508.8,-1 V3 M507,1.6 L508.8,3.6 L510.8,1.6" stroke="#1c3f80" stroke-width="1.3" fill="none"/><rect x="507.2" y="5" width="3.4" height="3.4" fill="#f4e23c" stroke="#3a4a88" stroke-width="0.5"/>
<path d="M518,-1 H534 V6 L527,9.4 L518,8 Z" fill="#a9b9c9"/><path d="M521,2 Q526,-2 533,2 L527,5 Z" fill="#d9dfe6"/><path d="M520,8 L534,3.6 V7 L527,9.6 Z" fill="#6f96bf"/>
<rect x="541.4" y="-1" width="13" height="8.6" fill="#c6dcf2" stroke="#8fa4c0" stroke-width="0.8"/><path d="M541.6,8.6 H556.2 V0" fill="none" stroke="#8a8a8a" stroke-width="1"/><circle cx="545" cy="1.6" r="2" fill="none" stroke="#e41818" stroke-width="1.4"/><circle cx="549.6" cy="2.2" r="2.4" fill="#f4f6fa" stroke="#e41818" stroke-width="1.4"/>
<rect x="566" y="-1" width="12" height="10.6" fill="#0c0c0c"/>
<rect x="568.6" y="0.9" width="1.6" height="1.5" fill="#f01818"/>
<rect x="571.8" y="0.9" width="1.6" height="1.5" fill="#fff"/>
<rect x="575" y="0.9" width="1.6" height="1.5" fill="#f01818"/>
<rect x="568.6" y="3.9" width="1.6" height="1.5" fill="#fff"/>
<rect x="571.8" y="3.9" width="1.6" height="1.5" fill="#fff"/>
<rect x="575" y="3.9" width="1.6" height="1.5" fill="#fff"/>
<rect x="568.6" y="6.7" width="1.6" height="1.5" fill="#fff"/>
<rect x="571.8" y="6.7" width="1.6" height="1.5" fill="#fff"/>
<rect x="575" y="6.7" width="1.6" height="1.5" fill="#fff"/>
<rect x="594" y="-2" width="14.2" height="11" rx="2" fill="#1f5cb4"/><rect x="594" y="-2" width="14.2" height="5" rx="2" fill="#2b6cc8"/>
<text x="601.2" y="7.6" font-size="12" font-weight="bold" fill="#fff" text-anchor="middle" font-family="Liberation Sans, sans-serif">?</text>
<path d="M634,4.6 L641.5,8.8 L650,4.4 L642,1.4 Z" fill="#3f6fb8"/><path d="M634,2.6 L641.5,6.6 L650,2.4 L642,-0.6 Z" fill="#7fa6dc"/><path d="M634,0.6 L641.5,4.4 L650,0.4 L642,-2.6 Z" fill="#a9c4ea"/>
<path d="M662,-1 H669.4 L667,4.6 H664.4 Z" fill="#fdf3a0" stroke="#d8b830" stroke-width="0.8"/><rect x="664.2" y="4.6" width="3" height="2.8" fill="#5264b0"/>
<circle cx="681.2" cy="1.2" r="6.2" fill="#fbe24c" stroke="#2f6cc8" stroke-width="0.9"/><rect x="675" y="6.6" width="1.6" height="1.4" fill="#f0c020"/><rect x="686" y="6.6" width="1.6" height="1.4" fill="#f0c020"/>
<rect x="696" y="-1" width="8" height="8.4" fill="#fff" stroke="#9ab0d0" stroke-width="0.8"/><circle cx="696.6" cy="0.6" r="4.6" fill="#a8c4e6" stroke="#7a9cc8" stroke-width="0.8"/><circle cx="696.6" cy="0.6" r="2" fill="none" stroke="#e8d890" stroke-width="0.9"/>
<rect x="710" y="0" width="1.6" height="1.6" fill="#a89018"/><path d="M714,1 L721,-0.5 V5.6 L715,7.4 Z" fill="#efe04a" stroke="#a89018" stroke-width="0.8"/><path d="M714,0 Q716,-2 719,-1" fill="none" stroke="#a89018" stroke-width="1"/>
<rect x="724.6" y="-2" width="9" height="8" fill="#fff" stroke="#000" stroke-width="1.3"/>
<text x="742" y="5.6" font-size="11" fill="#000" text-anchor="middle" font-family="Liberation Sans, sans-serif" textLength="4.6" lengthAdjust="spacingAndGlyphs">0</text>
</g>
</svg>
</body></html>
